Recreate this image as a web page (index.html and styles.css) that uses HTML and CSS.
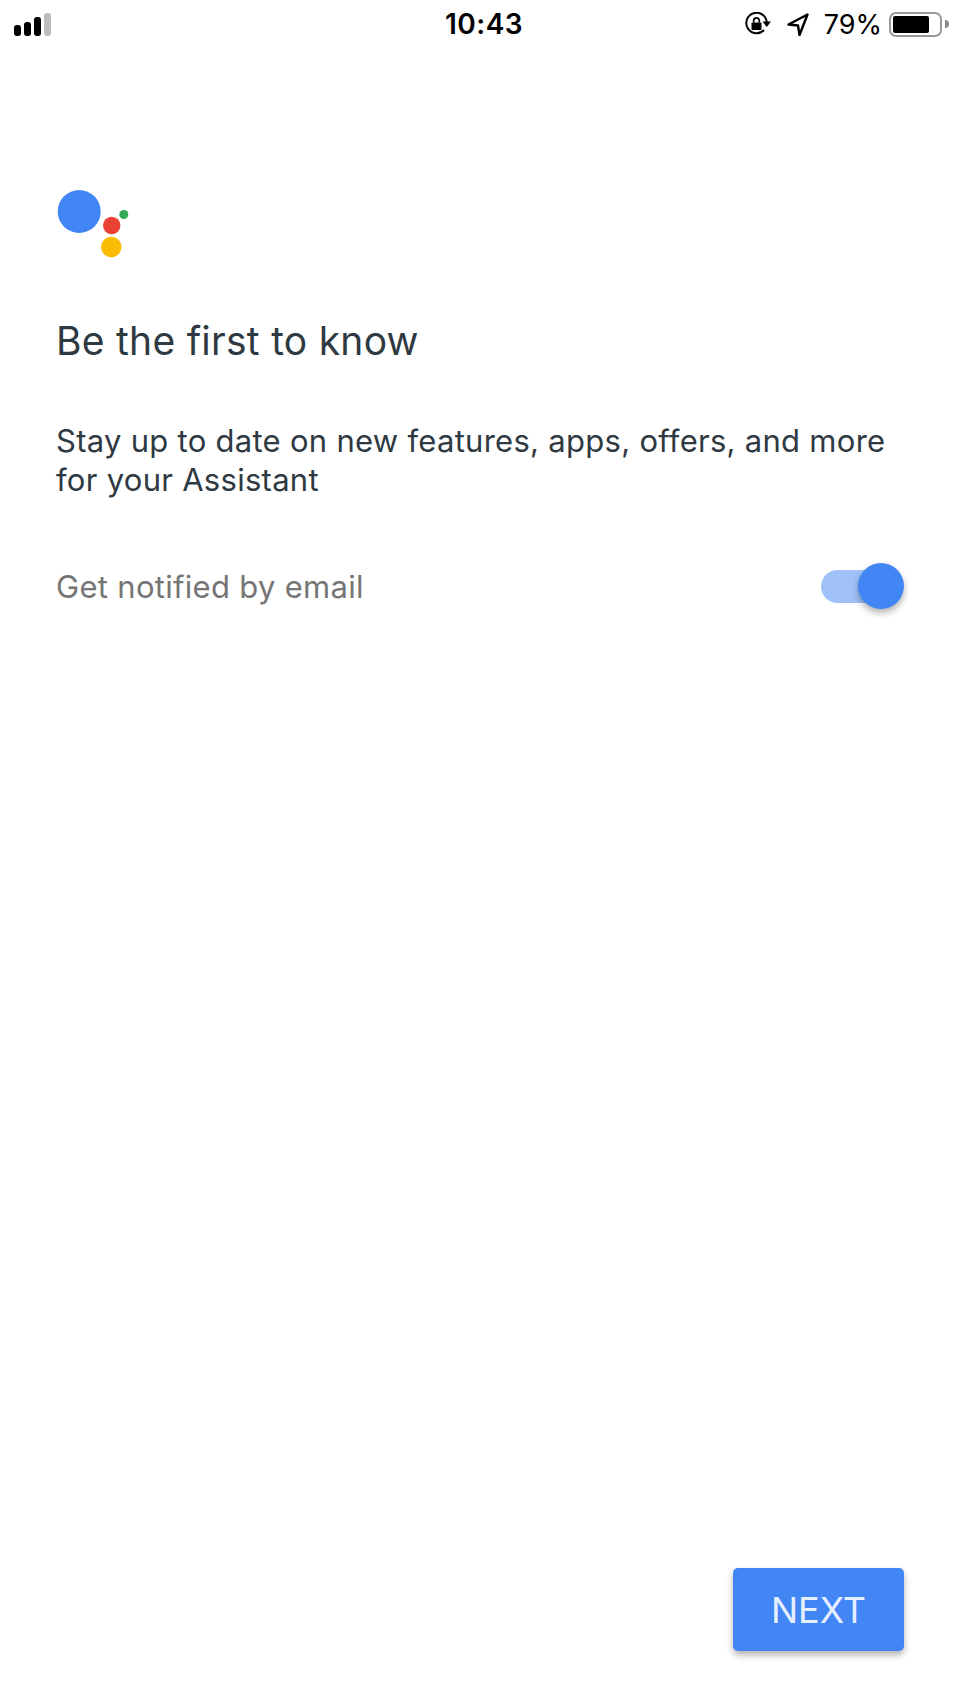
FILE: index.html
```
<!DOCTYPE html>
<html lang="en">
<head>
<meta charset="utf-8">
<title>Assistant</title>
<link rel="stylesheet" href="styles.css">
</head>
<body>
<div class="screen">
  <header class="status">
    <div class="signal"><i class="b1"></i><i class="b2"></i><i class="b3"></i><i class="b4"></i></div>
    <div class="time">10:43</div>
    <div class="status-right">
      <svg class="lock" width="27" height="24" viewBox="0 0 27 24"><path d="M19 18A10.2 10.2 0 1 1 21.7 10" fill="none" stroke="#000" stroke-width="2"/><path d="M17.5 9.5h8.5l-4.2 5.5z" fill="#000"/><rect x="6.5" y="10.5" width="10" height="7.5" rx="1" fill="#000"/><path d="M8.7 10.5V8.7a2.8 2.8 0 0 1 5.6 0V10.5" fill="none" stroke="#000" stroke-width="1.7"/></svg>
      <svg class="loc" width="22" height="23" viewBox="0 0 22 23"><path d="M20.5 1.5L1.5 11.5l9.5 1 1.5 9.5z" fill="none" stroke="#000" stroke-width="2.4" stroke-linejoin="round"/></svg>
      <span class="pct">79%</span>
      <div class="battery"><div class="charge"></div></div><div class="nub"></div>
    </div>
  </header>
  <main class="content">
    <svg class="logo" width="74" height="70" viewBox="0 0 74 70"><circle cx="22.2" cy="21.5" r="21.5" fill="#4285f4"/><circle cx="54.7" cy="35.5" r="8.7" fill="#ea4335"/><circle cx="54.3" cy="57" r="10.3" fill="#fbbc05"/><circle cx="66.8" cy="24.5" r="4.5" fill="#34a853"/></svg>
    <h1 class="title">Be the first to know</h1>
    <p class="desc">Stay up to date on new features, apps, offers, and more for your Assistant</p>
    <div class="row">
      <span class="label">Get notified by email</span>
      <div class="toggle"><div class="track"></div><div class="thumb"></div></div>
    </div>
  </main>
  <footer class="footer"><button class="next">NEXT</button></footer>
</div>
</body>
</html>
```
FILE: styles.css
```
* { box-sizing: border-box; }
html, body { margin: 0; padding: 0; background: #fff; }
.screen { width: 960px; height: 1707px; display: flex; flex-direction: column; font-family: Inter, sans-serif; overflow: hidden; }
.status { height: 48px; display: grid; grid-template-columns: 1fr auto 1fr; align-items: center; padding: 0 11px 0 14px; font-family: Inter, sans-serif; color: #000; }
.signal { display: flex; align-items: flex-end; gap: 3px; height: 23px; }
.signal i { display: block; width: 7px; border-radius: 3px; background: #000; }
.b1 { height: 11px; } .b2 { height: 14px; } .b3 { height: 19px; } .b4 { height: 23px; background: #bdbdbd !important; }
.time { font-size: 28px; font-weight: 600; letter-spacing: .5px; margin-left: 5px; }
.status-right { display: flex; align-items: center; justify-content: flex-end; }
.lock { margin-right: 15px; }
.loc { margin-right: 15px; }
.pct { font-size: 27px; font-weight: 400; margin-right: 8px; }
.battery { width: 53px; height: 25px; border: 2px solid #999; border-radius: 7px; padding: 2px; margin-left: -1px; }
.charge { width: 36px; height: 100%; background: #000; border-radius: 2px; }
.nub { width: 4px; height: 8px; background: #8a8a8a; border-radius: 0 4px 4px 0; margin-left: 3px; }
.content { flex: 1; padding: 142px 0 0 56px; display: flex; flex-direction: column; }
.logo { display: block; margin-left: 1px; }
.title { margin: 56px 0 0; font-size: 39px; font-weight: 400; line-height: 49px; letter-spacing: .27px; color: #2f3942; }
.desc { margin: 56px 0 0; font-size: 31px; line-height: 39px; letter-spacing: .28px; color: #2f3942; width: 850px; }
.row { width: 848px; margin-top: 64px; display: flex; justify-content: space-between; align-items: center; height: 46px; }
.label { font-size: 31px; letter-spacing: .3px; color: #757575; }
.toggle { position: relative; width: 83px; height: 46px; }
.track { position: absolute; left: 0; top: 7px; width: 70px; height: 33px; border-radius: 17px; background: #a0c2f9; }
.thumb { position: absolute; right: 0; top: 0; width: 46px; height: 46px; border-radius: 50%; background: #4285f4; box-shadow: 0 4px 7px rgba(0,0,0,.3); }
.footer { display: flex; justify-content: flex-end; padding: 0 56px 56px 0; }
.next { width: 171px; height: 83px; border: 0; border-radius: 5px; background: #4285f4; color: #e6effe; font: 400 36px Inter, sans-serif; box-shadow: 0 4px 7px rgba(0,0,0,.3); }
```
